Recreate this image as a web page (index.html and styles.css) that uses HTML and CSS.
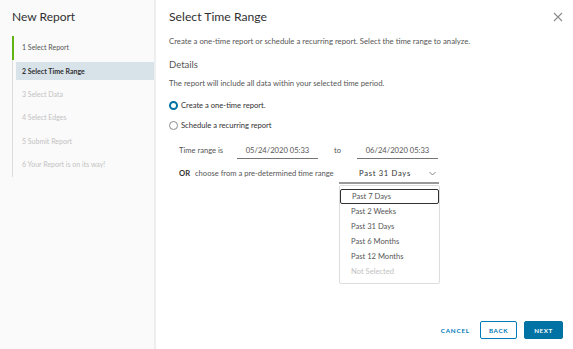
FILE: index.html
```html
<!DOCTYPE html>
<html lang="en">
<head>
  <meta charset="UTF-8" />
  <title>New Report</title>
  <link rel="stylesheet" href="styles.css">
</head>
<body>
  <div class="wizard">
    <aside class="sidebar">
      <h1>New Report</h1>
      <ul class="steps">
        <li class="done">1 Select Report</li>
        <li class="current">2 Select Time Range</li>
        <li>3 Select Data</li>
        <li>4 Select Edges</li>
        <li>5 Submit Report</li>
        <li>6 Your Report is on its way!</li>
      </ul>
    </aside>
    <main class="content">
      <div class="title-row">
        <h2>Select Time Range</h2>
        <svg class="close" width="10" height="10" viewBox="0 0 10 10"><path d="M1 1L9 9M9 1L1 9" stroke="#8c8c8c" stroke-width="1.1"/></svg>
      </div>
      <p class="intro">Create a one-time report or schedule a recurring report. Select the time range to analyze.</p>
      <h3>Details</h3>
      <p class="note">The report will include all data within your selected time period.</p>

      <div class="radios">
        <label class="radio"><span class="dot checked"></span>Create a one-time report.</label>
        <label class="radio"><span class="dot"></span>Schedule a recurring report</label>
      </div>

      <div class="range">
        <div class="range-row">
          <span class="lbl">Time range is</span>
          <span class="field">05/24/2020 05:33</span>
          <span class="to">to</span>
          <span class="field">06/24/2020 05:33</span>
        </div>
        <div class="range-row">
          <span class="lbl"><b>OR</b> choose from a pre-determined time range</span>
          <div class="select-wrap">
            <div class="select">Past 31 Days
              <svg class="chev" width="7" height="5" viewBox="0 0 7 5"><path d="M0.5 1L3.5 4L6.5 1" fill="none" stroke="#777" stroke-width="0.9"/></svg>
            </div>
            <ul class="menu">
              <li class="focus">Past 7 Days</li>
              <li>Past 2 Weeks</li>
              <li>Past 31 Days</li>
              <li>Past 6 Months</li>
              <li>Past 12 Months</li>
              <li class="muted">Not Selected</li>
            </ul>
          </div>
        </div>
      </div>

      <div class="footer">
        <button class="btn link">CANCEL</button>
        <button class="btn outline">BACK</button>
        <button class="btn primary">NEXT</button>
      </div>
    </main>
  </div>
</body>
</html>
```
FILE: styles.css
```css
* { box-sizing: border-box; }
html, body {
  margin: 0;
  padding: 0;
  height: 100%;
}
body {
  font-family: "Lato", "Open Sans", sans-serif;
  color: #565656;
  background: #fff;
}
.wizard {
  display: flex;
  height: 349px;
}
.sidebar {
  width: 156px;
  flex: none;
  background: #fafafa;
  border-right: 2px solid #eeeeee;
  padding: 9px 0 0 12px;
}
.sidebar h1 {
  margin: 0 0 12px 0;
  font-size: 12px;
  font-weight: 400;
  color: #313131;
}
.steps {
  list-style: none;
  margin: 0;
  padding: 0;
  border-left: 1px solid #dddddd;
}
.steps li {
  height: 23.5px;
  line-height: 23.5px;
  font-size: 7px;
  padding-left: 8px;
  color: #c2c2c2;
  margin-left: -1px;
  border-left: 2px solid transparent;
}
.steps li.done {
  border-left-color: #60b515;
  color: #565656;
}
.steps li.current {
  background: #d8e3e9;
  color: #313131;
  font-weight: 700;
  margin-left: 3px;
  padding-left: 4px;
  height: 18px;
  line-height: 18px;
  margin-top: 2px;
  margin-bottom: 3px;
}
.content {
  flex: 1;
  padding: 9px 10px 0 13px;
  display: flex;
  flex-direction: column;
}
.title-row {
  display: flex;
  justify-content: space-between;
  align-items: center;
}
.title-row h2 {
  margin: 0;
  font-size: 12.2px;
  font-weight: 400;
  color: #313131;
}
.close { margin-right: 0; }
.intro {
  margin: 12px 0 0 0;
  font-size: 7.75px;
}
h3 {
  margin: 13px 0 0 0;
  font-size: 9.5px;
  font-weight: 400;
  color: #565656;
}
.note {
  margin: 8px 0 0 0;
  font-size: 7.75px;
}
.radios {
  margin-top: 12px;
  display: flex;
  flex-direction: column;
  gap: 10px;
}
.radio {
  display: flex;
  align-items: center;
  gap: 3px;
  font-size: 7.6px;
  color: #313131;
}
.dot {
  width: 9px;
  height: 9px;
  border-radius: 50%;
  border: 1px solid #8c8c8c;
  background: #fff;
}
.dot.checked {
  border: 2.5px solid #0072a3;
  background: #fff;
}
.range {
  margin-top: 12px;
  padding-left: 10px;
}
.range-row {
  display: flex;
  align-items: flex-start;
  font-size: 7.6px;
  margin-bottom: 6px;
}
.range-row .lbl {
  width: 58px;
  padding-top: 3px;
}
.range-row:last-child .lbl { width: 160px; }
.range-row b { color: #313131; margin-right: 3px; }
.field {
  width: 81px;
  text-align: center;
  border-bottom: 1px solid #757575;
  padding: 3px 0 3px;
}
.to {
  width: 39px;
  padding: 3px 0 0 16px;
}
.select-wrap { width: 100px; }
.select {
  position: relative;
  text-align: center;
  letter-spacing: 0.7px;
  border-bottom: 2px solid #999;
  padding: 3px 8px 4px 0;
  color: #313131;
}
.chev {
  position: absolute;
  right: 3px;
  top: 6px;
}
.menu {
  list-style: none;
  margin: 1px 0 0 0;
  padding: 3px 0 4px 0;
  width: 101px;
  border: 1px solid #dddddd;
  border-radius: 2px;
  background: #fff;
}
.menu li {
  height: 15px;
  line-height: 15px;
  padding-left: 11px;
  color: #565656;
}
.menu li.focus {
  border: 1px solid #313131;
  border-radius: 2px;
  line-height: 13px;
}
.menu li.muted { color: #c2c2c2; }
.footer {
  margin-top: auto;
  margin-bottom: 10px;
  display: flex;
  justify-content: flex-end;
  gap: 7px;
}
.btn {
  font-family: inherit;
  font-size: 6.3px;
  font-weight: 700;
  letter-spacing: 0.6px;
  height: 18px;
  border-radius: 2px;
  cursor: pointer;
}
.btn.link {
  background: none;
  border: none;
  color: #0079b8;
  padding: 0 2px;
  letter-spacing: 0.8px;
  margin-right: 1px;
}
.btn.outline {
  background: #fff;
  border: 1px solid #0079b8;
  color: #0079b8;
  padding: 0 8px;
}
.btn.primary {
  background: #0072a3;
  border: 1px solid #0072a3;
  color: #fff;
  padding: 0 9px;
}
```
